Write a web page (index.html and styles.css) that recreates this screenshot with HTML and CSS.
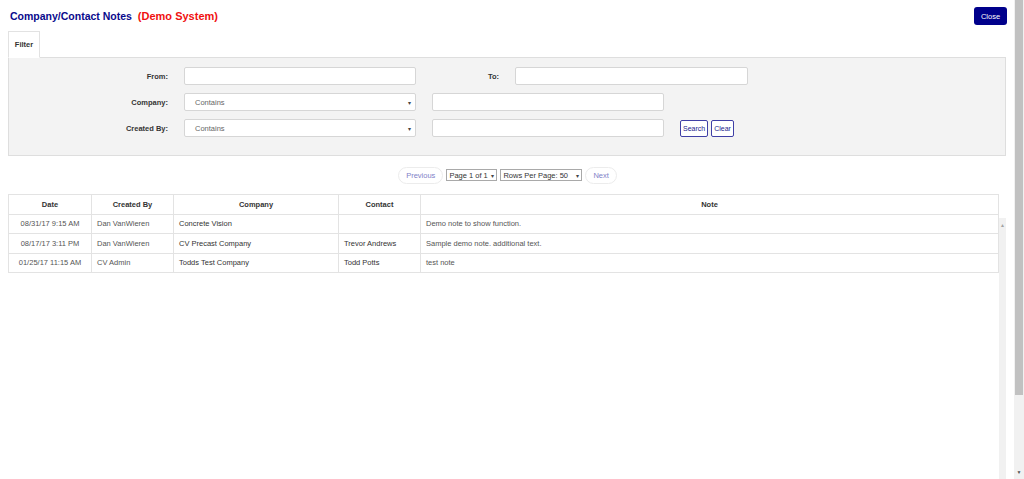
FILE: index.html
```html
<!DOCTYPE html>
<html>

<head>
    <meta http-equiv="Content-Type" content="text/html; charset=utf-8" />
    <title>Company/Contact Notes</title>
    <link rel="stylesheet" href="styles.css">
</head>

<body>
    <div class="page">
        <div class="header">
            <h1>Company/Contact Notes <span class="demo">(Demo System)</span></h1>
            <button class="close">Close</button>
        </div>

        <div class="tabs">
            <div class="tab">Filter</div>
        </div>
        <div class="filter">
            <div class="row">
                <label class="lbl">From:</label>
                <input class="txt" type="text" />
                <label class="lbl lbl-to">To:</label>
                <input class="txt txt-to" type="text" />
            </div>
            <div class="row">
                <label class="lbl">Company:</label>
                <div class="sel"><span>Contains</span><span class="arr">&#9662;</span></div>
                <input class="txt second" type="text" />
            </div>
            <div class="row">
                <label class="lbl">Created By:</label>
                <div class="sel"><span>Contains</span><span class="arr">&#9662;</span></div>
                <input class="txt second" type="text" />
                <div class="btns">
                    <button class="btn">Search</button>
                    <button class="btn">Clear</button>
                </div>
            </div>
        </div>

        <div class="pager">
            <div class="pill">Previous</div>
            <div class="psel psel-page"><span>Page 1 of 1</span><span class="arr">&#9662;</span></div>
            <div class="psel psel-rows"><span>Rows Per Page: 50</span><span class="arr">&#9662;</span></div>
            <div class="pill">Next</div>
        </div>

        <div class="grid">
            <table class="tbl head">
                <colgroup>
                    <col class="c1"><col class="c2"><col class="c3"><col class="c4"><col class="c5">
                </colgroup>
                <tr>
                    <th>Date</th>
                    <th>Created By</th>
                    <th>Company</th>
                    <th>Contact</th>
                    <th>Note</th>
                </tr>
            </table>
            <div class="body">
                <table class="tbl rows">
                    <colgroup>
                        <col class="c1"><col class="c2"><col class="c3"><col class="c4"><col class="c5">
                    </colgroup>
                    <tr>
                        <td class="date">08/31/17 9:15 AM</td>
                        <td class="soft">Dan VanWieren</td>
                        <td>Concrete Vision</td>
                        <td></td>
                        <td class="soft">Demo note to show function.</td>
                    </tr>
                    <tr>
                        <td class="date">08/17/17 3:11 PM</td>
                        <td class="soft">Dan VanWieren</td>
                        <td>CV Precast Company</td>
                        <td>Trevor Andrews</td>
                        <td class="soft">Sample demo note. additional text.</td>
                    </tr>
                    <tr>
                        <td class="date">01/25/17 11:15 AM</td>
                        <td class="soft">CV Admin</td>
                        <td>Todds Test Company</td>
                        <td>Todd Potts</td>
                        <td class="soft">test note</td>
                    </tr>
                </table>
                <div class="inner-scroll">
                    <span class="up">&#9650;</span>
                </div>
            </div>
        </div>
    </div>

    <div class="vscroll">
        <div class="thumb"></div>
        <span class="down">&#9660;</span>
    </div>
</body>

</html>
```

FILE: styles.css
```css
* {
    box-sizing: border-box;
}

body {
    margin: 0;
    height: 479px;
    overflow: hidden;
    display: flex;
    font-family: "Liberation Sans", Arial, sans-serif;
    font-size: 7.5px;
    color: #333;
    background: #fff;
}

.page {
    flex: 1;
    padding: 0 8px;
    min-width: 0;
}

/* title bar */
.header {
    display: flex;
    justify-content: space-between;
    align-items: center;
    height: 18px;
    margin-top: 7px;
    margin-bottom: 6px;
}

.header h1 {
    margin: 0 0 0 2px;
    font-size: 10.5px;
    font-weight: bold;
    color: #0a0a8c;
}

.header .demo {
    color: #f01010;
    margin-left: 3px;
    font-size: 11px;
}

.close {
    width: 33px;
    height: 18px;
    margin-right: -1px;
    border: none;
    border-radius: 3px;
    background: #00008b;
    color: #fff;
    font-family: inherit;
    font-size: 7.5px;
    padding: 0;
}

/* filter tab */
.tabs {
    display: flex;
}

.tab {
    width: 32px;
    height: 27px;
    margin-bottom: -1px;
    border: 1px solid #e2e2e2;
    border-bottom: 1px solid #fff;
    background: #fff;
    font-weight: bold;
    display: flex;
    align-items: center;
    justify-content: center;
    position: relative;
}

.filter {
    background: #f3f3f3;
    border: 1px solid #dedede;
    padding: 9px 0 18px 0;
    display: flex;
    flex-direction: column;
    gap: 8px;
}

.row {
    display: flex;
    align-items: center;
    height: 18px;
}

.lbl {
    width: 159px;
    margin-right: 16px;
    text-align: right;
    font-weight: bold;
}

.lbl-to {
    width: 67px;
    margin-left: 16px;
}

.txt {
    width: 232px;
    height: 18px;
    border: 1px solid #d6d6d6;
    border-radius: 2px;
    background: #fff;
    padding: 0 6px;
    font-family: inherit;
    font-size: 7.5px;
}

.txt-to {
    width: 233px;
}

.second {
    margin-left: 16px;
}

.sel {
    width: 232px;
    height: 18px;
    border: 1px solid #d6d6d6;
    border-radius: 2px;
    background: #fff;
    padding: 0 4px 0 10px;
    display: flex;
    justify-content: space-between;
    align-items: center;
    color: #666;
}

.arr {
    font-size: 6px;
    color: #444;
}

.btns {
    display: flex;
    gap: 3px;
    margin-left: 16px;
}

.btn {
    height: 17px;
    border: 1px solid #3f3fa6;
    border-radius: 2px;
    background: #fff;
    color: #1b1b8e;
    font-family: inherit;
    font-size: 7px;
    padding: 0 2px;
}

/* pager */
.pager {
    display: flex;
    justify-content: center;
    align-items: center;
    gap: 3px;
    margin: 10px 0 10px 0;
    padding-left: 1px;
    height: 18px;
}

.pill {
    height: 17px;
    padding: 0 7px;
    border: 1px solid #ececec;
    border-radius: 9px;
    color: #8181c8;
    display: flex;
    align-items: center;
}

.psel {
    height: 12px;
    border: 1px solid #a9a9a9;
    display: flex;
    align-items: center;
    justify-content: space-between;
    padding: 0 2px 0 2px;
    color: #333;
    font-size: 7.5px;
}

.psel-page {
    width: 51px;
}

.psel-rows {
    width: 82px;
}

/* notes grid */
.tbl {
    width: 990px;
    border-collapse: collapse;
    table-layout: fixed;
}

.c1 { width: 83px; }
.c2 { width: 82px; }
.c3 { width: 165px; }
.c4 { width: 82px; }
.c5 { width: 578px; }

.tbl th,
.tbl td {
    border: 1px solid #e3e3e3;
    height: 20px;
    padding: 0 5px;
    white-space: nowrap;
    overflow: hidden;
}

.tbl th {
    height: 19px;
    font-weight: bold;
    text-align: center;
    color: #333;
}

.tbl td {
    height: 19.5px;
}

.head th {
    border-bottom: none;
}

.rows tr:first-child td {
    border-top: 1px solid #e3e3e3;
}

.tbl td.date {
    text-align: center;
    color: #555;
}

.tbl td.soft {
    color: #555;
}

.body {
    display: flex;
    align-items: flex-start;
    height: 265px;
}

.inner-scroll {
    width: 9px;
    height: 261px;
    margin-top: 4px;
    background: #f1f1f1;
    display: flex;
    justify-content: center;
    padding-top: 5px;
}

.up {
    font-size: 5px;
    color: #a3a3a3;
    line-height: 5px;
}

/* page scrollbar */
.vscroll {
    width: 10px;
    background: #f1f1f1;
    display: flex;
    flex-direction: column;
    align-items: center;
    padding: 0 1px;
}

.thumb {
    width: 100%;
    height: 395px;
    background: #c1c1c1;
}

.down {
    margin-top: auto;
    margin-bottom: 4px;
    font-size: 5px;
    line-height: 5px;
    color: #505050;
}
```
